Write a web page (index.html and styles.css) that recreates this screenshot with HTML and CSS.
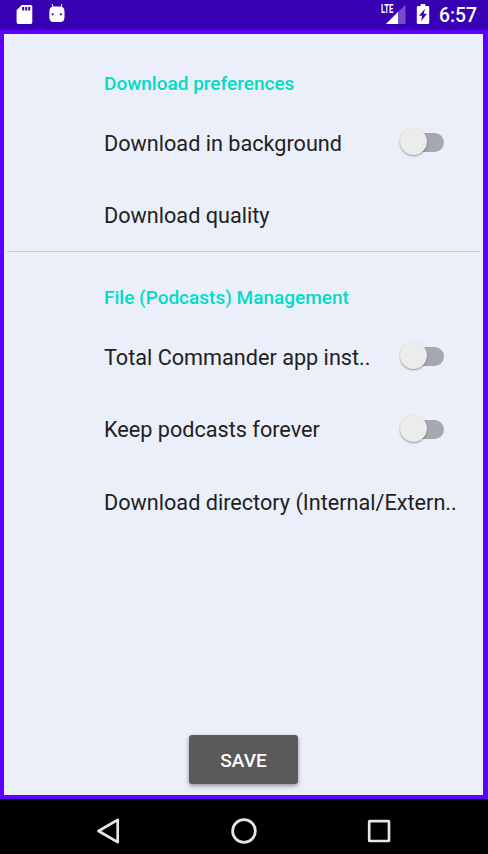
FILE: index.html
```html
<!DOCTYPE html>
<html lang="en">
<head>
<meta charset="utf-8">
<title>Download settings</title>
<link rel="stylesheet" href="styles.css">
</head>
<body>
<div class="phone">
  <header class="status">
    <svg class="status-left" width="70" height="30" viewBox="0 0 70 30">
      <path fill="#fff" fill-rule="evenodd" d="M21.7 5H30.7Q32.3 5 32.3 6.6V22.3Q32.3 24 30.7 24H18.3Q16.6 24 16.6 22.3V10.2ZM22.2 7V10.5H24.2V7ZM25.2 7V10.5H27.2V7ZM28.2 7V10.5H30.2V7Z"/>
      <path fill="none" stroke="#fff" stroke-width="1" d="M52 4L53.3 7.5M62 4L60.7 7.5"/>
      <path fill="#fff" fill-rule="evenodd" d="M49.3 12Q49.3 6.6 54 6.6H60Q64.5 6.6 64.5 12V17Q64.5 22 60.5 22H53.3Q49.3 22 49.3 17ZM51.6 14.3A1.1 1.1 0 1 0 53.8 14.3A1.1 1.1 0 1 0 51.6 14.3M59.8 14.3A1.1 1.1 0 1 0 62 14.3A1.1 1.1 0 1 0 59.8 14.3"/>
    </svg>
    <div class="status-right">
      <div class="signal">
        <svg width="26" height="30" viewBox="0 0 26 30">
          <path fill="#fff" fill-opacity=".3" d="M5 24L24.5 4.5V24Z"/>
          <path fill="#fff" d="M5 24L17 12V24Z"/>
        </svg>
        <span class="lte">LTE</span>
      </div>
      <svg class="battery" width="14" height="30" viewBox="0 0 14 30">
        <path fill="#fff" fill-rule="evenodd" d="M4.7 4H9.3V6H12Q13.2 6 13.2 7.2V22.8Q13.2 24 12 24H2Q.8 24 .8 22.8V7.2Q.8 6 2 6H4.7ZM9 8.7L3 15.7H6.2L5 21.3L11 13.7H7.7Z"/>
      </svg>
      <span class="clock">6:57</span>
    </div>
  </header>
  <main class="content">
    <section class="group">
      <h2 class="heading">Download preferences</h2>
      <div class="row"><span>Download in background</span><span class="switch"></span></div>
      <div class="row"><span>Download quality</span></div>
    </section>
    <section class="group divided">
      <h2 class="heading">File (Podcasts) Management</h2>
      <div class="row"><span>Total Commander app inst..</span><span class="switch"></span></div>
      <div class="row"><span>Keep podcasts forever</span><span class="switch"></span></div>
      <div class="row"><span>Download directory (Internal/Extern..</span></div>
    </section>
    <button class="save">SAVE</button>
  </main>
  <nav class="nav">
    <svg width="28" height="28" viewBox="0 0 28 28"><path d="M22.7 2.8V25.2L3.5 14Z"/></svg>
    <svg width="28" height="28" viewBox="0 0 28 28"><circle cx="14" cy="14" r="11.4"/></svg>
    <svg width="28" height="28" viewBox="0 0 28 28"><rect x="4.2" y="4.2" width="19.8" height="19.8" rx=".6"/></svg>
  </nav>
</div>
</body>
</html>
```
FILE: styles.css
```css
* { box-sizing: border-box; }
body { margin: 0; font-family: Roboto, sans-serif; }
.phone { width: 488px; height: 854px; display: flex; flex-direction: column; overflow: hidden; background: #000; }
.status { height: 30px; flex: none; background: #3700b3; display: flex; justify-content: space-between; }
.status svg { display: block; }
.status-right { display: flex; padding-right: 11px; }
.signal { position: relative; width: 26px; margin-right: 9px; }
.lte { position: absolute; left: 0; top: 4px; color: #fff; font-size: 12px; line-height: 11px; font-weight: 700; transform: scaleX(.64); transform-origin: left; }
.battery { margin-right: 9px; }
.clock { color: #fff; font-size: 19.3px; line-height: 31px; font-weight: 500; }
.content { height: 769px; flex: none; background: #ebeffa; border: 4px solid #5c00ff; border-right-width: 5px; padding: 25px 3px 0; display: flex; flex-direction: column; }
.group { flex: none; }
.divided { border-top: 1px solid #c9cddb; margin-top: -1px; padding-top: 21px; }
.heading { margin: 0; padding-left: 97px; height: 48px; line-height: 49px; font-size: 19px; font-weight: 500; color: #03dac5; }
.row { height: 72.5px; padding: 0 36px 0 97px; display: flex; align-items: center; justify-content: space-between; font-size: 21.65px; color: #212121; white-space: nowrap; }
.switch { position: relative; flex: none; width: 45px; height: 28px; margin-top: -2px; }
.switch::before { content: ""; position: absolute; left: 7px; top: 5px; width: 38px; height: 19px; border-radius: 10px; background: #a5a8b0; }
.switch::after { content: ""; position: absolute; left: 1px; top: 0; width: 27px; height: 27px; border-radius: 50%; background: #ececec; box-shadow: 0 1px 2px rgba(0, 0, 0, .38); }
.save { margin: auto auto 11px 182px; width: 109px; height: 49px; border: 0; padding: 0; border-radius: 3px; background: #5a5a5b; color: #fff; font: 500 19px/51px Roboto, sans-serif; box-shadow: 0 2px 4px rgba(0, 0, 0, .38); }
.nav { flex: 1; display: flex; justify-content: center; gap: 107px; padding: 18px 1px 0 0; }
.nav svg { fill: none; stroke: #e6e6e6; stroke-width: 2.7; stroke-linejoin: round; }
```
